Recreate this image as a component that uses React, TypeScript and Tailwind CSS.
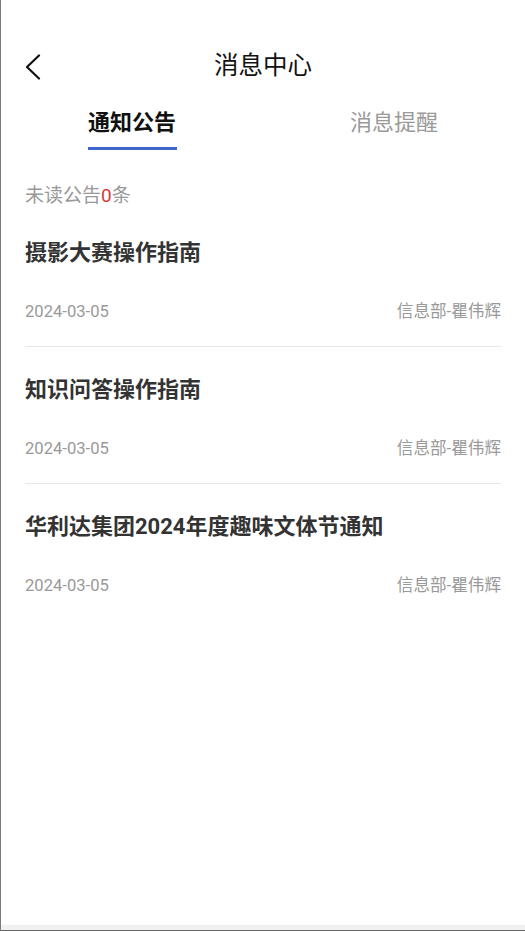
import React, { useState } from 'react';

const notices = [
  { id: 1, title: '摄影大赛操作指南', date: '2024-03-05', author: '信息部-瞿伟辉' },
  { id: 2, title: '知识问答操作指南', date: '2024-03-05', author: '信息部-瞿伟辉' },
  { id: 3, title: '华利达集团2024年度趣味文体节通知', date: '2024-03-05', author: '信息部-瞿伟辉' },
];

const tabs = ['通知公告', '消息提醒'];

const App: React.FC = () => {
  const [active, setActive] = useState(0);

  return (
    <div
      className="w-[525px] h-[931px] bg-white flex flex-col border-l border-[#7a7a7a] overflow-hidden"
      style={{ fontFamily: 'Roboto, "Noto Sans CJK SC", sans-serif' }}
    >
      <div className="flex-1 flex flex-col">
        {/* header */}
        <div className="pt-[44px]">
          <div className="relative h-[44px] flex items-center justify-center">
            <button className="absolute left-[23px] top-[10px] w-[18px] h-[26px] flex items-center justify-center">
              <svg width="16" height="26" viewBox="0 0 16 26" fill="none">
                <polyline
                  points="14,1.5 2,13 14,24.5"
                  stroke="#111"
                  strokeWidth="2.2"
                  strokeLinecap="round"
                  strokeLinejoin="round"
                />
              </svg>
            </button>
            <h1 className="text-[24.5px] leading-[30px] text-[#111]">消息中心</h1>
          </div>
        </div>

        {/* tabs */}
        <div className="flex mt-[20px]">
          {tabs.map((t, i) => (
            <button key={t} onClick={() => setActive(i)} className="flex-1 flex justify-center">
              <div className="flex flex-col items-center">
                <span
                  className={`text-[22px] leading-[30px] ${
                    i === active ? 'font-bold text-[#111]' : 'text-[#999]'
                  }`}
                >
                  {t}
                </span>
                <div
                  className={`mt-[9px] h-[3px] w-[89px] ${i === active ? 'bg-[#3f66cc]' : 'bg-transparent'}`}
                ></div>
              </div>
            </button>
          ))}
        </div>

        {/* list */}
        <div className="px-[24px]">
          <p className="mt-[32px] text-[19px] leading-[28px] text-[#999]">
            未读公告<span className="text-[#d43a3a]">0</span>条
          </p>

          <ul>
            {notices.map((n, i) => (
              <li
                key={n.id}
                className={`pt-[28px] pb-[22px] ${i < notices.length - 1 ? 'border-b border-[#e8e8e8]' : ''}`}
              >
                <h3 className="text-[22px] leading-[30px] font-bold text-[#333]">{n.title}</h3>
                <div className="mt-[32px] flex items-center justify-between text-[16.6px] leading-[24px] text-[#999]">
                  <span>{n.date}</span>
                  <span>{n.author}</span>
                </div>
              </li>
            ))}
          </ul>
        </div>
      </div>

      <div className="h-[6px] bg-[#f0f0f0] border-b border-[#666]"></div>
    </div>
  );
};

export default App;
